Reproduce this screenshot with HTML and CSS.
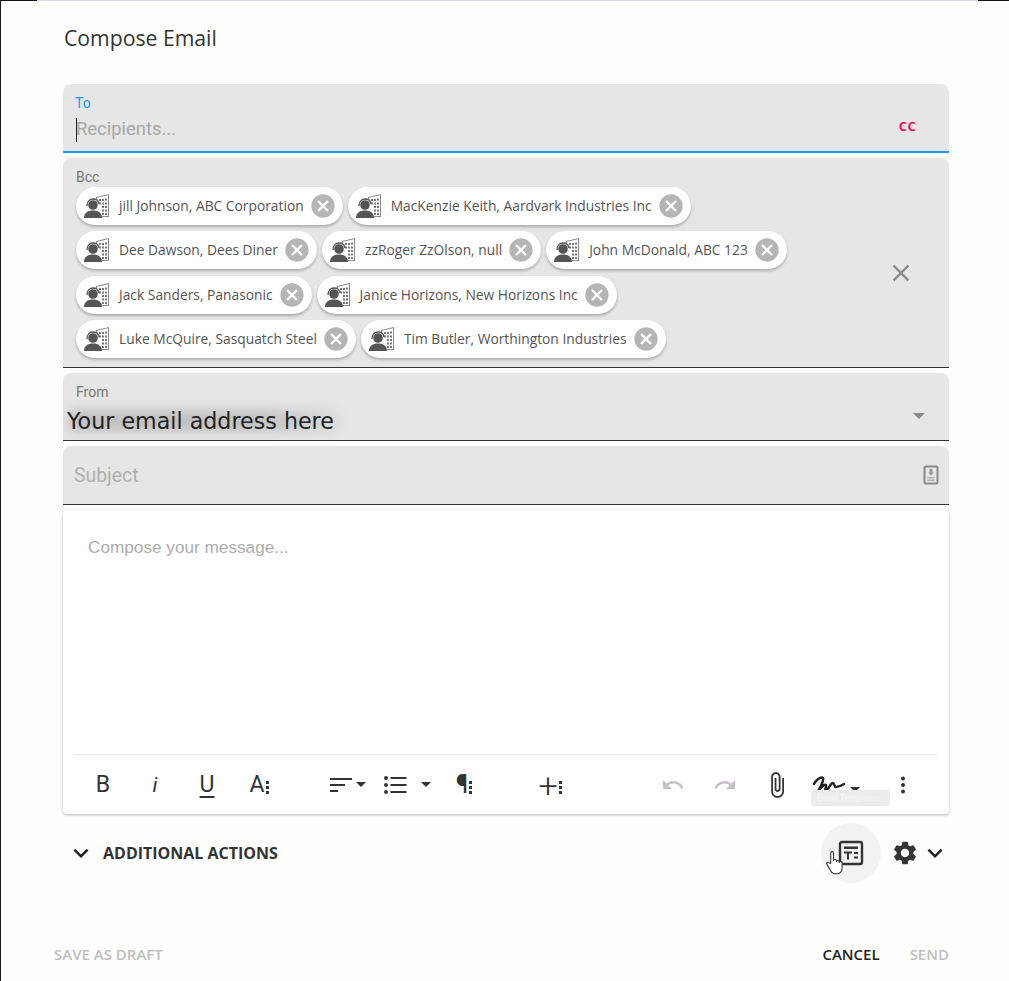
FILE: index.html
```html
<!DOCTYPE html>
<html lang="en">
<head>
<meta charset="utf-8">
<title>Compose Email</title>
<link rel="stylesheet" href="styles.css">
</head>
<body>
<svg class="defs" width="0" height="0" aria-hidden="true">
  <defs>
    <symbol id="contact" viewBox="0 0 26 24">
      <path fill="#8a8a8a" d="M12 3l13-3v23h-7v-1h6V1.300L13 3.800V6h-1z"/>
      <path fill="#777" d="M15 5h2v2h-2zM18 5h2v2h-2zM21 4.500h2v2h-2zM15 8.500h2v2h-2zM18 8.500h2v2h-2zM21 8.500h2v2h-2zM18 12h2v2h-2zM21 12h2v2h-2zM18 15.500h2v2h-2zM21 15.500h2v2h-2zM18 19h2v2h-2zM21 19h2v2h-2z"/>
      <circle cx="9" cy="11" r="4.800" fill="#555"/>
      <path fill="#555" d="M0 24c0-5 3.500-7.500 9-7.500S18 19 18 24z"/>
      <path fill="none" stroke="#555" stroke-width="1.300" d="M3 12c0-4.500 2.500-7 6-7s5.500 2 6 5"/>
    </symbol>
    <symbol id="cancel" viewBox="0 0 24 24">
      <path d="M12 2C6.470 2 2 6.470 2 12s4.470 10 10 10 10-4.470 10-10S17.530 2 12 2zm5 13.590L15.590 17 12 13.410 8.410 17 7 15.590 10.590 12 7 8.410 8.410 7 12 10.590 15.590 7 17 8.410 13.410 12 17 15.590z"/>
    </symbol>
    <symbol id="chevron" viewBox="0 0 24 24">
      <path d="M7.410 8.590 12 13.170l4.590-4.580L18 10l-6 6-6-6z"/>
    </symbol>
  </defs>
</svg>

<div class="frame">
  <h1 class="title">Compose Email</h1>

  <div class="field field-to">
    <span class="label label-active">To</span>
    <div class="to-row">
      <span class="caret-bar"></span>
      <span class="placeholder recipients">Recipients...</span>
      <span class="cc">CC</span>
    </div>
  </div>

  <div class="field field-bcc">
    <span class="label">Bcc</span>
    <div class="bcc-row">
      <div class="chips">
        <div class="chip"><svg class="chip-icon"><use href="#contact"/></svg><span>jill Johnson, ABC Corporation</span><svg class="chip-x"><use href="#cancel"/></svg></div>
        <div class="chip"><svg class="chip-icon"><use href="#contact"/></svg><span>MacKenzie Keith, Aardvark Industries Inc</span><svg class="chip-x"><use href="#cancel"/></svg></div>
        <div class="chip"><svg class="chip-icon"><use href="#contact"/></svg><span>Dee Dawson, Dees Diner</span><svg class="chip-x"><use href="#cancel"/></svg></div>
        <div class="chip"><svg class="chip-icon"><use href="#contact"/></svg><span>zzRoger ZzOlson, null</span><svg class="chip-x"><use href="#cancel"/></svg></div>
        <div class="chip"><svg class="chip-icon"><use href="#contact"/></svg><span>John McDonald, ABC 123</span><svg class="chip-x"><use href="#cancel"/></svg></div>
        <div class="chip"><svg class="chip-icon"><use href="#contact"/></svg><span>Jack Sanders, Panasonic</span><svg class="chip-x"><use href="#cancel"/></svg></div>
        <div class="chip"><svg class="chip-icon"><use href="#contact"/></svg><span>Janice Horizons, New Horizons Inc</span><svg class="chip-x"><use href="#cancel"/></svg></div>
        <div class="chip"><svg class="chip-icon"><use href="#contact"/></svg><span>Luke McQuire, Sasquatch Steel</span><svg class="chip-x"><use href="#cancel"/></svg></div>
        <div class="chip"><svg class="chip-icon"><use href="#contact"/></svg><span>Tim Butler, Worthington Industries</span><svg class="chip-x"><use href="#cancel"/></svg></div>
      </div>
      <svg class="clear-all" viewBox="0 0 24 24"><path d="M19 6.410 17.590 5 12 10.590 6.410 5 5 6.410 10.590 12 5 17.590 6.410 19 12 13.410 17.590 19 19 17.590 13.410 12z"/></svg>
    </div>
  </div>

  <div class="field field-from">
    <span class="label">From</span>
    <div class="from-row">
      <span class="smudge"></span>
      <span class="email">Your email address here</span>
      <span class="select-arrow"></span>
    </div>
  </div>

  <div class="field field-subject">
    <span class="placeholder subject">Subject</span>
    <svg class="subject-icon" viewBox="0 0 16 20">
      <rect x="1.500" y="1.500" width="13" height="17" rx="1.500" fill="none" stroke="#8a8a8a" stroke-width="2"/>
      <path fill="#9a9a9a" d="M6.500 4h3v3.500h1.500L8 10.500 5 7.500h1.500z"/>
      <rect x="4.500" y="12" width="7" height="1.500" fill="#b0b0b0"/>
      <rect x="4.500" y="14.500" width="7" height="1.500" fill="#b0b0b0"/>
    </svg>
  </div>

  <div class="editor">
    <div class="editor-body"><span class="placeholder compose">Compose your message...</span></div>
    <div class="toolbar">
      <span class="tool bold">B</span>
      <span class="tool gap-28 italic">i</span>
      <span class="tool gap-28 under">U</span>
      <span class="tool gap-28 letter">A<i class="dots"></i></span>

      <svg class="tool gap-58 icon" viewBox="0 0 24 24"><path d="M1 5h22v2H1zM1 11h15v2H1zM1 17h8v2H1z"/></svg>
      <span class="arrow gap-3"></span>
      <svg class="tool gap-17 icon" viewBox="0 0 24 24"><path d="M1 5a2 2 0 1 0 4 0 2 2 0 1 0-4 0zM1 12a2 2 0 1 0 4 0 2 2 0 1 0-4 0zM1 19a2 2 0 1 0 4 0 2 2 0 1 0-4 0zM7.500 4h16v2h-16zM7.500 11h16v2h-16zM7.500 18h16v2h-16z"/></svg>
      <span class="arrow gap-14"></span>
      <span class="tool gap-21 letter pilcrow">¶<i class="dots"></i></span>
      <span class="tool gap-62 letter plus">+<i class="dots"></i></span>

      <svg class="tool gap-99 icon faded" viewBox="0 0 24 24"><path d="M12.500 8c-2.650 0-5.050.990-6.900 2.600L2 7v9h9l-3.620-3.620c1.390-1.160 3.160-1.880 5.120-1.880 3.540 0 6.550 2.310 7.600 5.500l2.370-.780C21.080 11.030 17.150 8 12.500 8z"/></svg>
      <svg class="tool gap-28 icon faded redo" viewBox="0 0 24 24"><path d="M18.400 10.600C16.550 8.990 14.150 8 11.500 8c-4.650 0-8.580 3.030-9.960 7.220L3.900 16c1.050-3.190 4.050-5.500 7.600-5.500 1.950 0 3.730.720 5.120 1.880L13 16h9V7l-3.600 3.600z"/></svg>
      <svg class="tool gap-28 icon clip" viewBox="0 0 24 24"><path d="M16.500 6v11.500c0 2.210-1.790 4-4 4s-4-1.790-4-4V5c0-1.380 1.120-2.500 2.500-2.500s2.500 1.120 2.500 2.500v10.500c0 .550-.450 1-1 1s-1-.450-1-1V6H10v9.500c0 1.380 1.120 2.500 2.500 2.500s2.500-1.120 2.500-2.500V5c0-2.210-1.790-4-4-4S7 2.790 7 5v12.500c0 3.040 2.460 5.500 5.500 5.500s5.500-2.460 5.500-5.500V6h-1.500z"/></svg>
      <svg class="sign gap-24" viewBox="0 0 32 20"><path fill="none" stroke="#222" stroke-width="2.500" stroke-linecap="round" stroke-linejoin="round" d="M1 9c2-4 7-8 9-6 1 3-3 10-6 15 3-5 7-9 9-8 1 2-2 5 0 5 3 0 4-7 7-7 1.500 0 1 4 3 4 2 0 5-1 8-3"/></svg>
      <span class="arrow gap-5 sign-arrow"></span>
      <svg class="tool gap-31 icon" viewBox="0 0 24 24"><circle cx="12" cy="5.500" r="2"/><circle cx="12" cy="12" r="2"/><circle cx="12" cy="18.500" r="2"/></svg>
    </div>
    <span class="tooltip">Email Templates</span>
  </div>

  <div class="actions">
    <svg class="chev" viewBox="0 0 24 24"><use href="#chevron"/></svg>
    <span class="actions-text">ADDITIONAL ACTIONS</span>
    <div class="actions-right">
      <div class="template-btn">
        <svg class="template-icon" viewBox="0 0 26 26">
          <rect x="2" y="2" width="22" height="22" rx="2" fill="none" stroke="#333" stroke-width="2.400"/>
          <path fill="#333" d="M6 6.500h14v2.400H6zM6 11.500h8v2H11v6H9v-6H6zM16 12h4v2h-4zM16 16.500h4v2h-4z"/>
        </svg>
        <svg class="hand" viewBox="0 0 18 26">
          <path fill="#fff" stroke="#333" stroke-width="1.100" stroke-linejoin="round" d="M5 14V3c0-2 3-2 3 0v8c0-1.500 3-1.500 3 0v1c0-1.500 3-1.500 3 0v1c0-1.300 3-1.300 3 0v6c0 3-2 6-5 6H9c-3 0-4-3-5-5l-3-5c-1-2 1-3 2.500-1.500z"/>
        </svg>
      </div>
      <svg class="gear" viewBox="0 0 24 24"><path d="M19.140 12.940c.040-.3.060-.610.060-.940 0-.320-.020-.640-.070-.940l2.030-1.580c.180-.140.230-.410.120-.610l-1.920-3.320c-.120-.220-.370-.290-.590-.220l-2.390.960c-.5-.380-1.030-.7-1.620-.940l-.360-2.540c-.040-.240-.240-.410-.480-.410h-3.840c-.240 0-.430.170-.470.410l-.360 2.540c-.590.240-1.130.570-1.620.940l-2.390-.960c-.220-.080-.470 0-.590.220L2.740 8.870c-.120.210-.080.470.120.610l2.030 1.580c-.050.3-.090.630-.090.940s.020.640.070.940l-2.030 1.580c-.180.140-.230.410-.120.610l1.920 3.320c.120.220.370.290.590.220l2.390-.960c.5.380 1.030.7 1.620.94l.36 2.540c.050.240.240.410.480.410h3.840c.240 0 .440-.170.470-.410l.36-2.540c.590-.240 1.130-.560 1.620-.94l2.390.960c.220.080.470 0 .590-.220l1.920-3.320c.120-.220.070-.470-.12-.610l-2.010-1.580zM12 15.600c-1.980 0-3.600-1.620-3.600-3.600s1.620-3.600 3.600-3.600 3.600 1.620 3.600 3.600-1.620 3.600-3.600 3.600z"/></svg>
      <svg class="chev" viewBox="0 0 24 24"><use href="#chevron"/></svg>
    </div>
  </div>

  <div class="footer">
    <span class="btn disabled">SAVE AS DRAFT</span>
    <div class="footer-right">
      <span class="btn">CANCEL</span>
      <span class="btn disabled">SEND</span>
    </div>
  </div>
</div>
</body>
</html>
```

FILE: styles.css
```css
* { box-sizing: border-box; }
html, body { margin: 0; padding: 0; }
body {
  width: 1009px;
  height: 981px;
  overflow: hidden;
  background: #fefefd;
  font-family: "Roboto", "Liberation Sans", sans-serif;
  color: #333;
}
.defs { position: absolute; }

.frame {
  height: 981px;
  padding: 0 60px 0 62px;
  border-left: 1px solid #1a1a1a;
  background:
    linear-gradient(90deg, #111 0 36px, #dcdce6 36px 977px, #111 977px) top left / 100% 1px no-repeat,
    #fefefd;
  display: flex;
  flex-direction: column;
}

.title {
  margin: 0;
  padding: 24px 0 0 1px;
  height: 84px;
  font: 400 21.200px/28px "Open Sans", sans-serif;
  color: #333;
}

.field {
  background: #e6e6e6;
  border-radius: 8px 8px 0 0;
  border-bottom: 1px solid #333;
  margin-bottom: 5px;
  position: relative;
}
.label {
  display: block;
  font-size: 14px;
  line-height: 16px;
  color: #777;
  padding-left: 13px;
}
.label-active { color: #2196f3; padding-left: 12px; }
.placeholder { color: #a8a8a8; }

.field-to {
  height: 69px;
  padding-top: 11px;
  border-bottom: 2px solid #2196f3;
}
.to-row {
  display: flex;
  align-items: center;
  height: 26px;
  margin-top: 4px;
  padding-left: 13px;
  padding-right: 33px;
}
.caret-bar {
  width: 1px;
  height: 24px;
  margin-top: 4px;
  margin-right: -1px;
  background: #222;
}
.recipients { font-size: 18.400px; flex: 1; }
.cc {
  font: 700 13px/16px "Open Sans", sans-serif;
  color: #ef1458;
  margin-top: -5px;
  letter-spacing: .3px;
}

.field-bcc {
  height: 210px;
  padding-top: 11px;
}
.bcc-row {
  display: flex;
  align-items: center;
  padding-left: 13px;
  padding-right: 34px;
}
.chips {
  flex: 0 0 735px;
  display: flex;
  flex-wrap: wrap;
  gap: 6.400px 5px;
  padding-top: 2px;
}
.chip {
  display: flex;
  align-items: center;
  height: 38px;
  border-radius: 19px;
  background: #fff;
  box-shadow: 0 2px 3px rgba(0,0,0,.25);
  padding: 0 6px 0 8px;
  font: 400 13.800px/20px "Open Sans", sans-serif;
  color: #555;
  white-space: nowrap;
}
.chip-icon { width: 26px; height: 24px; margin-right: 9px; flex: none; }
.chip-x { width: 28px; height: 28px; margin-left: 5px; fill: #b5b5b5; flex: none; }
.clear-all { width: 28px; height: 28px; margin-left: auto; margin-top: 2px; fill: #8a8a8a; }

.field-from {
  height: 68px;
  padding-top: 11px;
}
.from-row {
  position: relative;
  display: flex;
  align-items: center;
  height: 30px;
  margin-top: 6px;
  padding-left: 4px;
  padding-right: 24px;
}
.email {
  position: relative;
  flex: 1;
  font: 400 22.200px/30px "DejaVu Sans", sans-serif;
  color: #222;
}
.smudge {
  position: absolute;
  left: 6px;
  top: 4px;
  width: 270px;
  height: 22px;
  background: linear-gradient(90deg, rgba(0,0,0,.16) 0 70%, rgba(0,0,0,.05));
  filter: blur(6px);
}
.select-arrow {
  align-self: flex-start;
  width: 0;
  height: 0;
  border-left: 6px solid transparent;
  border-right: 6px solid transparent;
  border-top: 6px solid #8a8a8a;
  margin-top: 7px;
}

.field-subject {
  height: 59px;
  display: flex;
  align-items: center;
  justify-content: space-between;
  padding: 0 10px 0 11px;
}
.subject { font-size: 19.400px; color: #b0b0b0; }
.subject-icon { width: 16px; height: 20px; }

.editor {
  position: relative;
  height: 304px;
  background: #fff;
  border-radius: 4px;
  box-shadow: 0 1px 3px rgba(0,0,0,.3);
  display: flex;
  flex-direction: column;
}
.editor-body {
  flex: 0 0 245px;
  margin: 0 11px;
  padding: 26px 14px 0;
  border-bottom: 1px solid #e8e8ee;
}
.compose { font: 400 17.200px/22px "Liberation Sans", sans-serif; color: #adadad; }

.toolbar {
  flex: 1;
  display: flex;
  align-items: center;
  padding-left: 28px;
  padding-top: 1px;
}
.tool {
  flex: none;
  width: 24px;
  height: 24px;
  display: flex;
  align-items: center;
  justify-content: center;
  font-size: 23px;
  line-height: 24px;
  color: #333;
}
.icon { fill: #333; }
.faded { fill: #c4c4c4; }
.redo { fill: #c8c0c8; }
.clip { width: 28px; height: 28px; margin-right: -4px; transform: translateX(-2px); }
.bold { font-weight: 400; }
.italic { font-style: italic; font-size: 21px; }
.under { text-decoration: underline; text-underline-offset: 4px; text-decoration-thickness: 2px; }
.letter { position: relative; }
.dots {
  display: block;
  width: 3px;
  height: 13px;
  margin-left: 1px;
  margin-top: 4px;
  background: radial-gradient(circle at 50% 1.500px, #333 1.500px, transparent 1.600px) 0 0 / 3px 5px repeat-y;
}
.pilcrow { font-size: 25px; }
.plus { font-size: 34px; font-weight: 300; }
.arrow {
  flex: none;
  width: 0;
  height: 0;
  border-left: 5px solid transparent;
  border-right: 5px solid transparent;
  border-top: 5px solid #333;
  margin-top: -2px;
}
.sign { width: 32px; height: 20px; flex: none; }
.sign-arrow { margin-top: 8px; }
.gap-3 { margin-left: 3px; }
.gap-5 { margin-left: 5px; }
.gap-14 { margin-left: 14px; }
.gap-17 { margin-left: 17px; }
.gap-21 { margin-left: 21px; }
.gap-24 { margin-left: 24px; }
.gap-28 { margin-left: 28px; }
.gap-31 { margin-left: 31px; }
.gap-58 { margin-left: 58px; }
.gap-62 { margin-left: 62px; }
.gap-99 { margin-left: 99px; }

.tooltip {
  position: absolute;
  left: 748px;
  top: 280px;
  width: 79px;
  height: 16px;
  padding: 0 6px;
  overflow: hidden;
  border-radius: 3px;
  background: #ececec;
  font-size: 8.500px;
  line-height: 16px;
  color: #f6f6f6;
  white-space: nowrap;
}

.actions {
  height: 77px;
  display: flex;
  align-items: center;
}
.chev { width: 30px; height: 30px; fill: #222; flex: none; }
.actions > .chev { margin-left: 3px; }
.actions-text {
  font: 700 16px/20px "Open Sans", sans-serif;
  color: #333;
  margin-left: 7px;
}
.actions-right {
  margin-left: auto;
  display: flex;
  align-items: center;
  margin-right: -1px;
}
.template-btn {
  position: relative;
  width: 60px;
  height: 60px;
  border-radius: 50%;
  background: #f2f2f3;
  display: flex;
  align-items: center;
  justify-content: center;
}
.template-icon { width: 26px; height: 26px; }
.hand {
  position: absolute;
  left: 5px;
  top: 27px;
  width: 17px;
  height: 25px;
}
.gear { width: 28px; height: 28px; fill: #333; margin-left: 10px; }
.actions-right .chev { margin-left: 1px; }

.footer {
  margin-top: 51px;
  margin-left: -9px;
  display: flex;
  justify-content: space-between;
  align-items: center;
  height: 24px;
  font: 600 15px/20px "Open Sans", sans-serif;
}
.footer-right { display: flex; gap: 30px; }
.btn { color: #222; }
.disabled { color: #c0c0c0; }
```
